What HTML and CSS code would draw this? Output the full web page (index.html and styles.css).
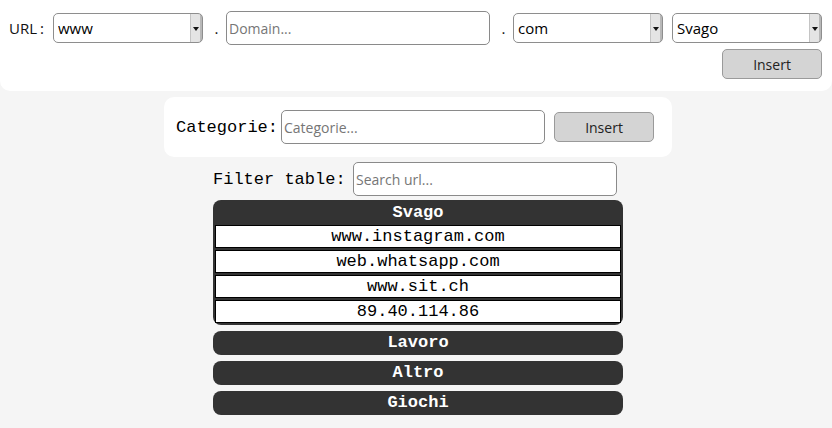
FILE: index.html
```html
<!DOCTYPE html>
<html lang="it">
<head>
<meta charset="utf-8">
<title>URL manager</title>
<link rel="stylesheet" href="styles.css">
</head>
<body>
<header class="top">
  <div class="url-row">
    <label class="url-label">URL<span class="colon">:</span></label>
    <span class="sel"><select class="select"><option>www</option></select></span>
    <span class="dot">.</span>
    <input class="field" type="text" placeholder="Domain...">
    <span class="dot">.</span>
    <span class="sel"><select class="select"><option>com</option></select></span>
    <span class="sel sel-cat"><select class="select"><option>Svago</option></select></span>
  </div>
  <div class="action-row">
    <button class="btn">Insert</button>
  </div>
</header>
<main class="center">
  <section class="cat-panel">
    <label class="mono-label cat-label">Categorie:</label>
    <input class="field" type="text" placeholder="Categorie...">
    <button class="btn">Insert</button>
  </section>
  <div class="filter-row">
    <label class="mono-label filter-label">Filter table:</label>
    <input class="field" type="text" placeholder="Search url...">
  </div>
  <div class="cats">
    <div class="cat">
      <div class="cat-head">Svago</div>
      <div class="cat-row">www.instagram.com</div>
      <div class="cat-row">web.whatsapp.com</div>
      <div class="cat-row">www.sit.ch</div>
      <div class="cat-row">89.40.114.86</div>
    </div>
    <div class="cat collapsed"><div class="cat-head">Lavoro</div></div>
    <div class="cat collapsed"><div class="cat-head">Altro</div></div>
    <div class="cat collapsed"><div class="cat-head">Giochi</div></div>
  </div>
</main>
</body>
</html>
```
FILE: styles.css
```css
* { box-sizing: border-box; }
html, body { margin: 0; padding: 0; }
body {
  background: #f5f5f5;
  font-family: "Open Sans", "DejaVu Sans", sans-serif;
  color: #111;
}
.top {
  background: #fff;
  height: 91px;
  padding: 11px 10px 12px 9px;
  border-radius: 0 0 10px 10px;
}
.url-row {
  display: flex;
  align-items: center;
  height: 34px;
}
.url-label {
  width: 44px;
  font-size: 15px;
  color: #111;
}
.colon { margin-left: 3px; }
.sel {
  position: relative;
  display: block;
  width: 150px;
  height: 30px;
}
.sel::after {
  content: "";
  position: absolute;
  right: 4px;
  top: 14px;
  border-left: 3px solid transparent;
  border-right: 3px solid transparent;
  border-top: 4px solid #111;
}
.sel-cat { margin-left: 9px; }
.select {
  appearance: none;
  -webkit-appearance: none;
  width: 150px;
  height: 30px;
  border: 1px solid #8e8e8e;
  border-radius: 5px;
  padding: 0 14px 0 4px;
  font-family: "Open Sans", "DejaVu Sans", sans-serif;
  font-size: 15px;
  color: #000;
  background: linear-gradient(to left, #b8b8b8 0, #b8b8b8 2px, #e4e4e4 2px, #e4e4e4 11px, #c4c4c4 11px, #c4c4c4 12px, #fff 12px);
}
.dot {
  width: 23px;
  padding-left: 4px;
  text-align: center;
  font-size: 15px;
  color: #111;
}
.field {
  width: 264px;
  height: 34px;
  border: 1px solid #8a8a8a;
  border-radius: 5px;
  padding: 0 2px;
  font-family: "Open Sans", "DejaVu Sans", sans-serif;
  font-size: 14px;
  color: #111;
  background: #fff;
}
.field::placeholder { color: #767676; }
.action-row {
  display: flex;
  justify-content: flex-end;
  margin-top: 4px;
}
.btn {
  width: 100px;
  height: 30px;
  border: 1px solid #9a9a9a;
  border-radius: 5px;
  background: #d4d4d4;
  font-family: "Open Sans", "DejaVu Sans", sans-serif;
  font-size: 14px;
  color: #222;
  padding: 0;
}
.center {
  display: flex;
  flex-direction: column;
  align-items: center;
  padding-left: 4px;
}
.cat-panel {
  width: 508px;
  margin-top: 6px;
  background: #fff;
  border-radius: 10px;
  padding: 13px 18px 13px 12px;
  display: flex;
  align-items: center;
}
.mono-label {
  font-family: "Liberation Mono", "DejaVu Sans Mono", monospace;
  font-size: 17px;
  color: #000;
  white-space: pre;
}
.cat-label { width: 105px; }
.cat-panel .btn { margin-left: 9px; }
.filter-row {
  width: 410px;
  margin-top: 5px;
  display: flex;
  align-items: center;
}
.filter-label { width: 140px; }
.cats {
  width: 410px;
  margin-top: 4px;
  display: flex;
  flex-direction: column;
  gap: 6px;
}
.cat {
  background: #333;
  border-radius: 8px;
  padding: 0 2px 2px;
  font-family: "Liberation Mono", "DejaVu Sans Mono", monospace;
  font-size: 17px;
}
.cat-head {
  height: 25px;
  line-height: 25px;
  text-align: center;
  color: #fff;
  font-weight: bold;
}
.cat-row {
  height: 23px;
  line-height: 21px;
  border: 1px solid #000;
  background: #fff;
  color: #000;
  text-align: center;
}
.cat-row + .cat-row { margin-top: 2px; }
.cat.collapsed { padding: 0; }
.cat.collapsed .cat-head { height: 24px; line-height: 24px; }
```
